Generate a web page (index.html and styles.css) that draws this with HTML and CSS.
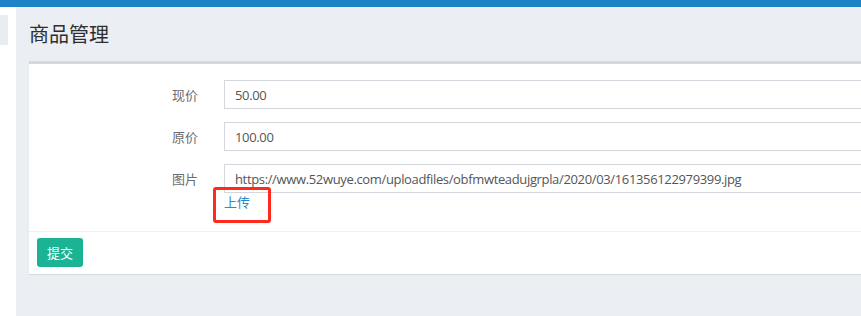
FILE: index.html
```html
<!DOCTYPE html>
<html lang="zh-CN">
<head>
    <meta charset="UTF-8">
    <meta name="viewport" content="width=device-width, initial-scale=1.0">
    <title>商品管理</title>
    <link rel="stylesheet" href="styles.css">
</head>
<body>
    <div class="topbar"></div>
    <div class="layout">
        <aside class="sidebar">
            <div class="side-tab"></div>
        </aside>
        <main class="content">
            <h1 class="page-title">商品管理</h1>
            <div class="card">
                <form class="form">
                    <div class="row">
                        <label>现价</label>
                        <input type="text" value="50.00">
                    </div>
                    <div class="row">
                        <label>原价</label>
                        <input type="text" value="100.00">
                    </div>
                    <div class="row row-last">
                        <label>图片</label>
                        <div class="field">
                            <input type="text" value="https://www.52wuye.com/uploadfiles/obfmwteadujgrpla/2020/03/161356122979399.jpg">
                            <div class="upload">
                                <a href="#">上传</a>
                                <span class="mark"></span>
                            </div>
                        </div>
                    </div>
                </form>
                <div class="card-footer">
                    <button type="button">提交</button>
                </div>
            </div>
        </main>
    </div>
</body>
</html>
```

FILE: styles.css
```css
html, body {
    margin: 0;
    padding: 0;
    overflow: hidden;
}
body {
    font-family: "Open Sans", "Noto Sans CJK SC", sans-serif;
    font-size: 13px;
    color: #676a6c;
    background-color: #ebeef3;
    width: 861px;
    height: 316px;
}
.topbar {
    height: 7px;
    background-color: #1e82c7;
}
.layout {
    display: flex;
    height: 309px;
}
.sidebar {
    width: 16px;
    flex-shrink: 0;
    background-color: #fff;
    padding-top: 8px;
}
.side-tab {
    width: 8px;
    height: 30px;
    background-color: #e9ecf1;
}
.content {
    flex: 1;
    padding-left: 13px;
    min-width: 0;
    overflow: hidden;
}
.page-title {
    margin: 0;
    padding-top: 16px;
    height: 38px;
    font-family: "Noto Sans CJK SC", sans-serif;
    font-size: 20px;
    font-weight: 400;
    line-height: 22px;
    color: #2f2f2f;
}
.card {
    width: 840px;
    background-color: #fff;
    border-top: 3px solid #d5d8e1;
    box-shadow: 0 1px 1px rgba(0, 0, 0, 0.08);
}
.form {
    padding-top: 16px;
    border-bottom: 1px solid #eef0f2;
}
.row {
    display: flex;
    align-items: flex-start;
    margin-bottom: 13px;
}
.row-last {
    margin-bottom: 0;
}
.row label {
    width: 169px;
    flex-shrink: 0;
    padding-right: 26px;
    text-align: right;
    line-height: 29px;
    font-family: "Noto Sans CJK SC", sans-serif;
    color: #6b6d70;
}
.field {
    flex: 1;
}
.row input {
    display: block;
    width: 100%;
    height: 29px;
    box-sizing: border-box;
    border: 1px solid #d5d6de;
    border-right: none;
    padding: 0 10px;
    font-family: "Open Sans", "Noto Sans CJK SC", sans-serif;
    font-size: 13px;
    letter-spacing: -0.35px;
    color: #555;
    outline: none;
}
.upload {
    position: relative;
    height: 38px;
    line-height: 18px;
}
.upload a {
    font-family: "Noto Sans CJK SC", sans-serif;
    color: #2d8ac9;
    text-decoration: none;
}
.mark {
    position: absolute;
    left: -11px;
    top: -6px;
    width: 52px;
    height: 30px;
    border: 3px solid #ff2a1c;
    border-radius: 3px;
}
.card-footer {
    padding: 6px 8px 7px;
}
button {
    background-color: #1ab394;
    color: #fff;
    border: none;
    border-radius: 3px;
    height: 29px;
    width: 46px;
    padding: 0;
    font-family: "Noto Sans CJK SC", sans-serif;
    font-size: 13px;
    cursor: pointer;
}
```
